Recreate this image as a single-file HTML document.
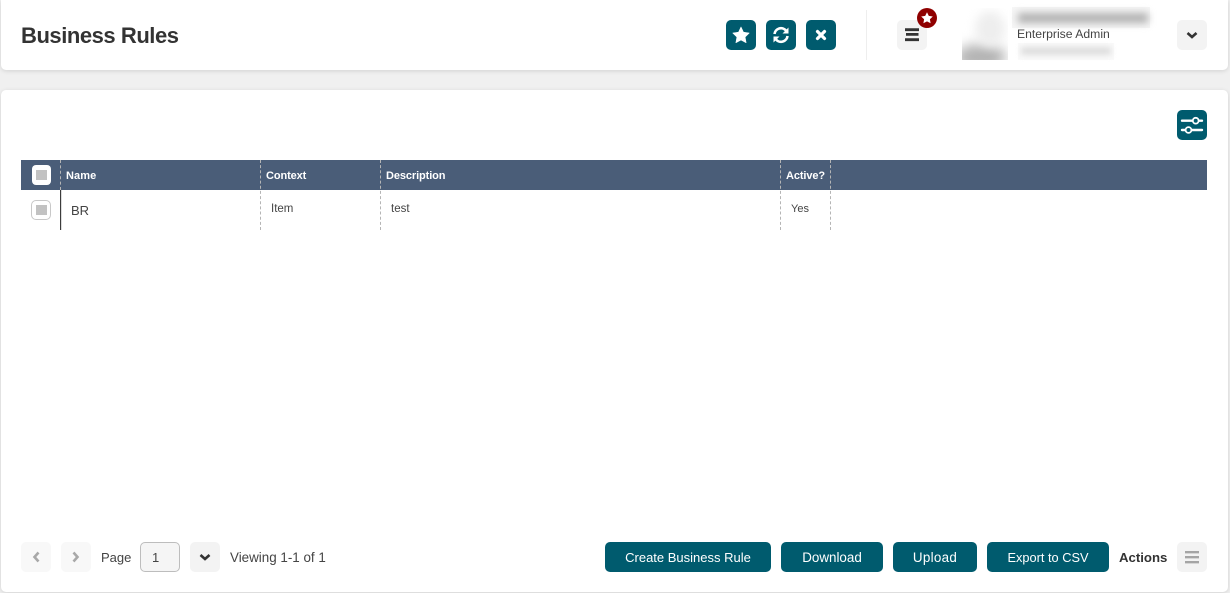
<!DOCTYPE html>
<html lang="en"><head><meta charset="utf-8"><title>Business Rules</title>
<style>
*{box-sizing:border-box}
html,body{margin:0;padding:0}
body{width:1230px;height:593px;overflow:hidden;background:#f0f0f0;position:relative;font-family:"Liberation Sans",sans-serif;color:#444}
div,span.t,svg{position:absolute}
.t{white-space:nowrap;line-height:1}
.card{background:#fff;box-shadow:0 1px 5px rgba(0,0,0,.13)}
.tb{background:#005b6e;border-radius:5px;width:30px;height:30px}
.gb{background:#f3f3f3;border-radius:5px;width:30px;height:30px}
.btn{background:#005b6e;border-radius:5px;height:30px;top:542px;color:#fff;text-align:center;line-height:31px;white-space:nowrap}
.th{color:#fff;font-weight:bold;font-size:11px;top:171px;letter-spacing:-.1px}
.td{font-size:11.5px;color:#444}
.dash{width:0;border-left:1px dashed #b5b5b5;top:160px;height:70px}
</style></head><body>

<div class="card" style="left:1px;top:0;width:1227px;height:70px;border-radius:0 0 5px 5px"></div>
<div class="card" style="left:1px;top:90px;width:1227px;height:502px;border-radius:5px"></div>

<span class="t" style="left:21px;top:25px;font-size:22px;font-weight:bold;color:#333;letter-spacing:-.45px">Business Rules</span>

<div class="tb" style="left:726px;top:20px"><svg width="30" height="30" viewBox="0 0 30 30" style="left:0;top:0"><path d="M15 7l2.500 5.200 5.700.8-4.100 4 1 5.700-5.100-2.700-5.100 2.700 1-5.700-4.100-4 5.700-.8z" fill="#fff" stroke="#fff" stroke-width=".6" stroke-linejoin="round"/></svg></div>
<div class="tb" style="left:766px;top:20px"><svg width="30" height="30" viewBox="0 0 30 30" style="left:0;top:0" fill="none" stroke="#fff" stroke-width="2.600"><path d="M8.500 14a6.500 6.500 0 0 1 11.500-3.400"/><path d="M21.500 16a6.500 6.500 0 0 1-11.500 3.400"/><path d="M22.500 7.500v6h-6z" fill="#fff" stroke="none"/><path d="M7.500 22.500v-6h6z" fill="#fff" stroke="none"/></svg></div>
<div class="tb" style="left:806px;top:20px"><svg width="30" height="30" viewBox="0 0 30 30" style="left:0;top:0"><path d="M11.500 11.500l7 7M18.500 11.500l-7 7" stroke="#fff" stroke-width="3.200" stroke-linecap="round"/></svg></div>

<div style="left:866px;top:10px;width:1px;height:50px;background:#eee"></div>

<div class="gb" style="left:897px;top:20px"><svg width="30" height="30" viewBox="0 0 30 30" style="left:0;top:0"><path d="M8 8.300h14v2.800H8zM9 13h12.500v2.800H9zM8 18.300h14v2.800H8z" fill="#333"/></svg></div>
<div style="left:917px;top:8px;width:20px;height:20px;border-radius:50%;background:#8f0000"><svg width="20" height="20" viewBox="0 0 20 20" style="left:0;top:0"><path d="M10 4.300l1.800 3.600 4 .6-2.900 2.800.7 4-3.600-1.900-3.600 1.900.7-4-2.900-2.800 4-.6z" fill="#fff"/></svg></div>

<div style="left:962px;top:8px;width:46px;height:52px;overflow:hidden;background:#fff">
  <div style="left:-6px;top:36px;width:50px;height:26px;border-radius:50%;background:#b4b4b4;filter:blur(6px)"></div>
  <div style="left:13px;top:3px;width:30px;height:36px;border-radius:50%;background:#eeeeee;filter:blur(5px)"></div>
</div>
<div style="left:1012px;top:7px;width:138px;height:21px;background:#f6f6f6"></div>
<div style="left:1018px;top:13px;width:130px;height:10px;background:#b0b0b0;filter:blur(4px)"></div>
<span class="t" style="left:1017px;top:28px;font-size:12.200px;color:#444">Enterprise Admin</span>
<div style="left:1018px;top:43px;width:96px;height:17px;background:#fafafa"></div>
<div style="left:1021px;top:47px;width:90px;height:8px;background:#dedede;filter:blur(3px)"></div>

<div class="gb" style="left:1177px;top:20px"><svg width="30" height="30" viewBox="0 0 30 30" style="left:0;top:0"><path d="M10.500 13l4.500 4 4.500-4" fill="none" stroke="#333" stroke-width="2.600"/></svg></div>

<div class="tb" style="left:1177px;top:110px"><svg width="30" height="30" viewBox="0 0 30 30" style="left:0;top:0" fill="none" stroke="#fff"><path d="M5 10.700h20M5 20h20" stroke-width="2.400" stroke-linecap="round"/><circle cx="18.700" cy="10.700" r="2.900" fill="#005b6e" stroke-width="1.800"/><circle cx="11.500" cy="20" r="2.900" fill="#005b6e" stroke-width="1.800"/></svg></div>

<div style="left:21px;top:160px;width:1186px;height:30px;background:#4a5d78"></div>
<div style="left:32px;top:165px;width:19px;height:20px;border-radius:4px;background:#fff"></div>
<div style="left:36px;top:170px;width:11px;height:10px;background:#c2c2c2"></div>
<div style="left:31px;top:200px;width:20px;height:20px;border-radius:5px;background:#fff;border:1px solid #c8c8c8"></div>
<div style="left:36px;top:205px;width:11px;height:10px;background:#c2c2c2"></div>

<div style="left:60px;top:190px;width:1px;height:40px;background:#3c3c3c"></div>
<div style="left:61px;top:190px;width:1px;height:40px;background:#dcdcdc"></div>
<div class="dash" style="left:60px;height:30px"></div>
<div class="dash" style="left:260px"></div>
<div class="dash" style="left:380px"></div>
<div class="dash" style="left:780px"></div>
<div class="dash" style="left:830px"></div>

<span class="t th" style="left:66px;letter-spacing:.1px">Name</span>
<span class="t th" style="left:266px">Context</span>
<span class="t th" style="left:386px">Description</span>
<span class="t th" style="left:786px">Active?</span>

<span class="t" style="left:71px;top:204px;font-size:13px;color:#444">BR</span>
<span class="t td" style="left:271px;top:204px">Item</span>
<span class="t td" style="left:391px;top:204px">test</span>
<span class="t td" style="left:791px;top:204px;font-size:11px">Yes</span>

<div class="gb" style="left:21px;top:542px;background:#f8f8f8"><svg width="30" height="30" viewBox="0 0 30 30" style="left:0;top:0"><path d="M17.500 10.500l-4 4.500 4 4.500" fill="none" stroke="#a8a8a8" stroke-width="2.600"/></svg></div>
<div class="gb" style="left:61px;top:542px;background:#f8f8f8"><svg width="30" height="30" viewBox="0 0 30 30" style="left:0;top:0"><path d="M12.500 10.500l4 4.500-4 4.500" fill="none" stroke="#a8a8a8" stroke-width="2.600"/></svg></div>
<span class="t" style="left:101px;top:551px;font-size:13px">Page</span>
<div style="left:140px;top:542px;width:40px;height:30px;border:1px solid #bdbdbd;border-radius:5px;background:#f5f5f5"></div>
<span class="t" style="left:152px;top:551px;font-size:13px">1</span>
<div class="gb" style="left:190px;top:542px"><svg width="30" height="30" viewBox="0 0 30 30" style="left:0;top:0"><path d="M10.500 13l4.500 4 4.500-4" fill="none" stroke="#333" stroke-width="2.600"/></svg></div>
<span class="t" style="left:230px;top:551px;font-size:13.400px">Viewing 1-1 of 1</span>

<div class="btn" style="left:605px;width:166px;font-size:13px">Create Business Rule</div>
<div class="btn" style="left:781px;width:102px;font-size:13.400px">Download</div>
<div class="btn" style="left:893px;width:84px;font-size:13.400px;letter-spacing:.3px">Upload</div>
<div class="btn" style="left:987px;width:122px;font-size:12.800px">Export to CSV</div>
<span class="t" style="left:1119px;top:551px;font-size:13.200px;font-weight:bold;color:#333">Actions</span>
<div class="gb" style="left:1177px;top:542px"><svg width="30" height="30" viewBox="0 0 30 30" style="left:0;top:0"><path d="M8 9h14v2.400H8zM8 14h14v2.400H8zM8 19h14v2.400H8z" fill="#a5a5a5"/></svg></div>

</body></html>
